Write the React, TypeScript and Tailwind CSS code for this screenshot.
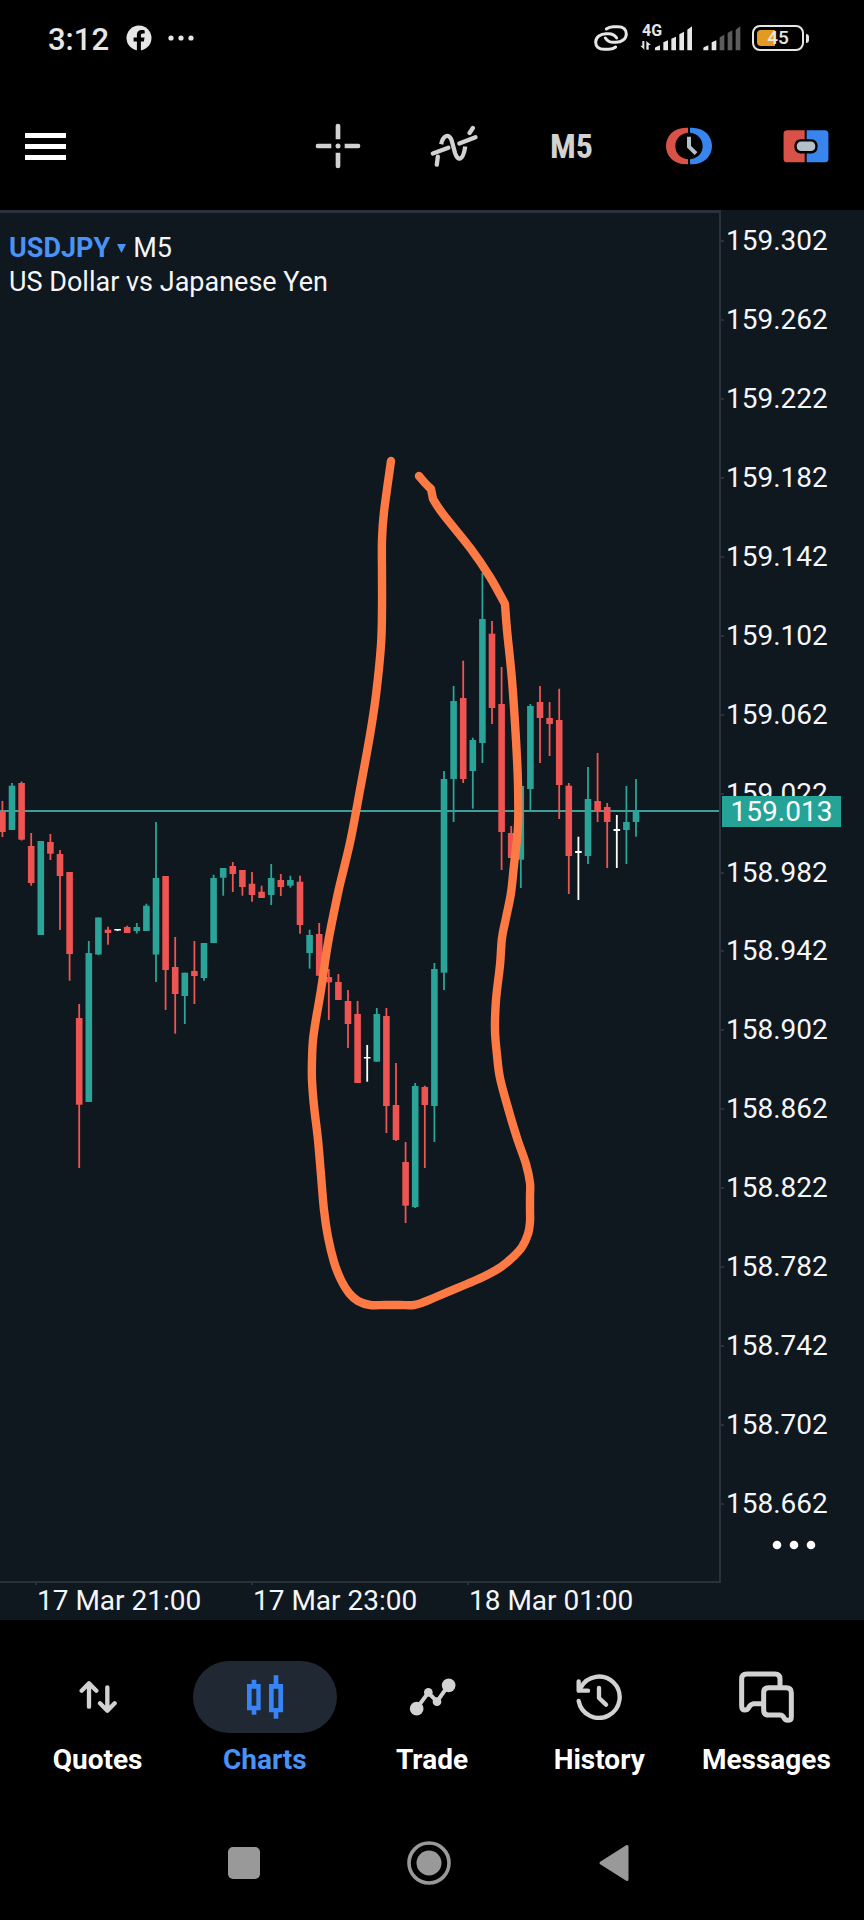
import type { ReactNode } from "react";

type Tone = "up" | "down" | "flat";
/** tone, high, body top, body bottom, low */
type Candle = [Tone, number, number, number, number];

const CANDLES: Candle[] = [
  ["down", 801, 811, 832, 837],
  ["up", 783, 785.7, 830, 830],
  ["down", 781.5, 783, 839.7, 840.5],
  ["down", 833, 846, 883, 885.7],
  ["up", 841, 841, 935, 935],
  ["down", 834, 842, 853.7, 860],
  ["down", 850, 854, 876, 930],
  ["down", 872, 872, 954, 980.7],
  ["down", 1004, 1018, 1104.7, 1168],
  ["up", 941, 953, 1102, 1102],
  ["up", 917.5, 917.5, 954.5, 955],
  ["down", 926.7, 929.7, 933, 944.7],
  ["flat", 929, 929, 930.5, 931],
  ["down", 925.7, 927, 933, 933],
  ["up", 923, 927, 931, 933.5],
  ["up", 903.7, 905.7, 931, 931],
  ["up", 822, 878, 954.5, 982],
  ["down", 876, 876, 970, 1010],
  ["down", 937, 967, 994, 1033.7],
  ["up", 972.7, 972.7, 996, 1024],
  ["down", 941, 971, 976, 1004],
  ["up", 943, 943, 978, 980.7],
  ["up", 874.7, 878, 943, 943],
  ["up", 868, 868, 877.7, 895.7],
  ["down", 862, 866, 874, 892],
  ["down", 870, 870, 887, 895.7],
  ["down", 872, 883.7, 895, 901.7],
  ["down", 885.7, 891.7, 898, 898],
  ["up", 864, 878, 895, 905],
  ["down", 874, 880, 887, 896],
  ["up", 875.7, 880, 885.7, 887.7],
  ["down", 875.7, 881.7, 925, 933.7],
  ["up", 929.7, 935, 953, 968.7],
  ["down", 923, 934, 975.7, 975.7],
  ["down", 969, 977, 982.3, 1020],
  ["down", 974, 982, 1000, 1000],
  ["down", 990, 1001, 1024, 1048],
  ["down", 1001, 1014, 1083, 1083],
  ["flat", 1045, 1057, 1058.5, 1081.7],
  ["up", 1008, 1014, 1061.7, 1061.7],
  ["down", 1008, 1016, 1106, 1133],
  ["down", 1063, 1105, 1140, 1141],
  ["down", 1142, 1162, 1205.7, 1223],
  ["up", 1083, 1086, 1207, 1208],
  ["down", 1085.7, 1087, 1105, 1168],
  ["up", 963, 969, 1106, 1142],
  ["up", 771, 779, 972.7, 990],
  ["up", 686, 701, 779, 822],
  ["down", 660.7, 698, 779, 783],
  ["up", 737.7, 740, 771, 808.7],
  ["up", 573, 619, 743, 763],
  ["down", 621, 633.7, 708, 724],
  ["down", 667, 704, 832, 870],
  ["down", 826, 833, 858, 858],
  ["up", 786, 786, 859.7, 888],
  ["up", 704, 706, 789, 811],
  ["down", 686, 702, 718, 763],
  ["down", 702, 718, 724, 756],
  ["down", 688.7, 720, 785, 819],
  ["down", 783, 785.7, 856, 894],
  ["flat", 836.7, 851, 853, 900],
  ["up", 767, 799, 856, 864],
  ["down", 753, 801, 811, 822],
  ["down", 803, 807, 822, 868],
  ["flat", 815, 829, 831, 868],
  ["up", 786, 822, 830, 864],
  ["up", 779, 811, 822, 836.7],
];

const TONES: Record<Tone, string> = { up: "#2aa398", down: "#ee5451", flat: "#ffffff" };

/** Freehand marker, split where the line turns sharply */
const STROKES: [number, number][][] = [
  [
    [391, 461], [384, 512], [382, 540], [382, 575], [382, 610], [381, 645],
    [376, 695], [370, 735], [360, 790], [351, 838], [344, 868], [338, 893],
    [328, 943], [321, 990], [316, 1019], [313, 1040], [312, 1060], [312, 1080],
    [314, 1106], [318, 1140], [321, 1175], [324, 1210], [328, 1237], [334, 1262],
    [341, 1280], [349, 1293], [358, 1301], [370, 1305], [385, 1305], [400, 1305],
    [414, 1305], [424, 1302], [436, 1297], [467, 1284], [485, 1276], [501, 1267],
    [513, 1257], [522, 1247], [528, 1234], [530, 1222], [530, 1209], [530, 1196],
    [530, 1183], [526, 1164], [517, 1138], [508, 1108], [500, 1078], [497, 1055],
    [495, 1030], [496, 1000], [500, 965], [502, 938], [506, 918], [511, 893],
    [514, 865], [518, 827], [518, 785], [516, 740], [512, 680], [507, 630],
    [505, 604],
  ],
  [[505, 604], [490, 577], [471, 549], [443, 514], [433, 499]],
  [[433, 499], [431, 489]],
  [[431, 489], [425, 483], [419, 476]],
];

function smoothPath(points: [number, number][]) {
  let d = `M${points[0][0]} ${points[0][1]}`;
  for (let i = 0; i < points.length - 1; i++) {
    const a = points[Math.max(i - 1, 0)];
    const b = points[i];
    const c = points[i + 1];
    const e = points[Math.min(i + 2, points.length - 1)];
    d += `C${b[0] + (c[0] - a[0]) / 6} ${b[1] + (c[1] - a[1]) / 6} ${c[0] - (e[0] - b[0]) / 6} ${c[1] - (e[1] - b[1]) / 6} ${c[0]} ${c[1]}`;
  }
  return d;
}

const PRICES = [
  "159.302", "159.262", "159.222", "159.182", "159.142", "159.102",
  "159.062", "159.022", "158.982", "158.942", "158.902", "158.862",
  "158.822", "158.782", "158.742", "158.702", "158.662",
];

const TIMES = ["17 Mar 21:00", "17 Mar 23:00", "18 Mar 01:00"];

function StatusBar() {
  return (
    <div className="flex h-[76px] items-center justify-between pl-12 pr-[55px] text-[#e6e6e6]">
      <div className="flex items-center">
        <span className="w-[78px] pt-1 text-[31px] font-medium leading-8">3:12</span>
        <svg viewBox="0 0 26 26" className="size-[26px]" aria-label="Facebook">
          <circle cx="13" cy="13" r="12.5" fill="#e6e6e6" />
          <path d="M10.9 26V16.6H7.6V12.6H10.9V10.2C10.9 6.6 12.8 5.1 15.9 5.1C17 5.1 18 5.2 18.7 5.4V8.6H16.9C15.4 8.6 14.9 9.4 14.9 10.6V12.6H18.5L17.9 16.6H14.9V26Z" fill="#000" />
        </svg>
        <svg viewBox="0 0 26 6" className="ml-4 h-1.5 w-[26px]" fill="#e6e6e6" aria-label="More notifications">
          <circle cx="3" cy="3" r="2.6" />
          <circle cx="13" cy="3" r="2.6" />
          <circle cx="23" cy="3" r="2.6" />
        </svg>
      </div>
      <div className="flex items-center">
        <svg viewBox="0 0 102 78" className="h-[26px] w-[34px]" fill="none" stroke="#e6e6e6" strokeWidth="9" strokeLinecap="round" aria-label="Linked">
          <path d="M37 12C43 7 50 5 58 5H72C88 5 97 14 97 27C97 42 82 52 66 52H58C47 52 39 47 34 39" />
          <path d="M65 66C59 71 52 73 44 73H30C14 73 5 64 5 51C5 36 20 26 36 26H44C55 26 63 31 68 39" />
        </svg>
        <div className="relative ml-3">
          <svg viewBox="0 0 159 78" className="h-[26px] w-[53px]" fill="#e6e6e6" aria-label="Signal strong">
            <path d="M13 48V74L1 62H7V48ZM19 74V48L33 60H26V74Z" />
            <path d="M45 76V70Q45 67 48 66L60 61V76ZM70 76V52L84 46V76ZM94 76V41L108 35V76ZM118 76V28L132 20V76ZM142 76V14L156 4V76Z" />
          </svg>
          <span className="absolute left-0.5 -top-0.5 text-[16px] font-bold leading-4">4G</span>
        </div>
        <svg viewBox="0 0 117 78" className="ml-[10px] h-[26px] w-[39px]" fill="#e6e6e6" aria-label="Signal weak">
          <path d="M1 76V70Q1 67 4 66L16 61V76ZM26 76V52L40 46V76Z" />
          <path d="M50 76V37L64 29V76ZM74 76V24L88 16V76ZM98 76V14L112 4V76Z" fill="#5c5c5c" />
        </svg>
        <div className="ml-[10px] flex items-center gap-0.5">
          <div className="relative flex h-[26px] w-[52px] items-center justify-center rounded-lg border-2 border-[#e6e6e6]">
            <span className="absolute left-[3px] h-4 w-[18px] rounded-l bg-[#e39a22]" />
            <span className="relative text-[19px] font-medium leading-5">45</span>
          </div>
          <span className="h-[9px] w-[3px] rounded-r bg-[#e6e6e6]" />
        </div>
      </div>
    </div>
  );
}

function ToolButton({ label, children }: { label: string; children: ReactNode }) {
  return (
    <button type="button" aria-label={label} className="flex h-24 w-[117px] items-center justify-center">
      {children}
    </button>
  );
}

function Toolbar() {
  return (
    <header className="flex h-[134px] items-center justify-between pb-1.5 pt-3">
      <button type="button" aria-label="Menu" className="flex h-24 items-center pl-[25px] pr-6">
        <svg viewBox="0 0 41 27" className="h-[27px] w-[41px]" fill="#fff">
          <path d="M0 0H41V5H0ZM0 11H41V16H0ZM0 22H41V27H0Z" />
        </svg>
      </button>
      <div className="flex">
        <ToolButton label="Crosshair">
          <svg viewBox="0 0 138 138" className="size-[46px]" fill="#d2d2d2">
            <path d="M62 49V8Q62 2 69 2T76 8V49ZM62 89V130Q62 136 69 136T76 130V89ZM49 62H8Q2 62 2 69T8 76H49ZM89 62H130Q136 62 136 69T130 76H89Z" />
            <circle cx="69" cy="69" r="7.5" />
          </svg>
        </ToolButton>
        <ToolButton label="Indicators">
          <svg viewBox="30 26 147 130" className="h-[43px] w-[49px]" fill="none" stroke="#d2d2d2" strokeLinecap="round">
            <path d="M38 112L85 95M118 82L167 63" strokeWidth="13" />
            <path d="M63 84C69 59 86 48 95 73L105 110C113 135 129 137 136 91" strokeWidth="13" strokeLinecap="butt" />
            <path d="M53 122L50 146M149 50L159 35" strokeWidth="13" />
          </svg>
        </ToolButton>
        <ToolButton label="Timeframe M5">
          <span className="font-['Roboto_Condensed','Liberation_Sans_Narrow',Roboto,sans-serif] text-[34px] font-bold leading-10 text-[#d2d2d2]">M5</span>
        </ToolButton>
        <ToolButton label="Pending order">
          <svg viewBox="0 0 138 114" className="h-[38px] w-[46px]">
            <path d="M66 2H60C22 2 0 28 0 57S22 112 60 112H66V97C42 94 28 78 28 57S42 20 66 17Z" fill="#d95248" />
            <path d="M72 2H78C116 2 138 28 138 57S116 112 78 112H72V97C96 94 110 78 110 57S96 20 72 17Z" fill="#3785ed" />
            <path d="M69 29V59L90 80" fill="none" stroke="#b3c0c7" strokeWidth="12" />
          </svg>
        </ToolButton>
        <ToolButton label="One-click trading">
          <svg viewBox="0 0 138 100" className="h-[33px] w-[46px]">
            <path d="M65 1H12Q1 1 1 12V87Q1 98 12 98H65Z" fill="#d95248" />
            <path d="M71 1H126Q137 1 137 12V87Q137 98 126 98H71Z" fill="#3785ed" />
            <rect x="34" y="28" width="70" height="43" rx="18" fill="#000" />
            <rect x="41" y="35" width="56" height="29" rx="13" fill="#b3c0c7" />
          </svg>
        </ToolButton>
      </div>
    </header>
  );
}

function CandleChart() {
  return (
    <svg viewBox="0 213 719 1368" preserveAspectRatio="none" className="absolute inset-0 size-full" aria-label="USDJPY candlestick chart">
      <path d="M0 811H719" stroke="#3f9f98" strokeWidth="2" />
      {CANDLES.map(([tone, high, top, bottom, low], i) => {
        const x = 2.4 + i * 9.6;
        return (
          <g key={i} fill={TONES[tone]}>
            <rect x={x - 0.9} y={high} width="1.8" height={low - high} />
            <rect x={x - 3.3} y={top} width="6.6" height={bottom - top} />
          </g>
        );
      })}
      <path d={STROKES.map(smoothPath).join("")} fill="none" stroke="#fe7a45" strokeWidth="8.4" strokeLinecap="round" strokeLinejoin="round" />
    </svg>
  );
}

function Chart() {
  return (
    <main className="flex flex-1 flex-col bg-[#0f171f] text-[28px] text-[#f4f6f8]">
      <div className="flex flex-1">
        <div className="relative flex-1 border-b-2 border-r-2 border-t-[3px] border-[#2a313c]">
          <CandleChart />
          <div className="relative pl-[9px] pt-[18px] text-[27px] leading-[34px]">
            <button type="button" className="flex items-center">
              <span className="font-bold text-[#4a92f5]">USDJPY</span>
              <svg viewBox="0 0 9 9" className="mx-[7px] size-[9px]" fill="#4a92f5">
                <path d="M0 0H9L4.5 9Z" />
              </svg>
              <span>M5</span>
            </button>
            <p>US Dollar vs Japanese Yen</p>
          </div>
        </div>
        <aside className="relative flex w-[143px] flex-col pt-[15px]">
          <ul className="flex flex-1 flex-col justify-between">
            {PRICES.map((price) => (
              <li key={price} className="flex items-center gap-0.5 leading-8">
                <span className="h-0.5 w-[3px] bg-[#2a313c]" />
                <span>{price}</span>
              </li>
            ))}
          </ul>
          <output className="absolute left-px top-[586px] flex h-[31px] w-[119px] items-center justify-center bg-[#26a397] leading-8 text-white">
            159.013
          </output>
          <button type="button" aria-label="More" className="flex h-[63px] justify-center pl-0.5 pt-5">
            <svg viewBox="0 0 44 10" className="h-[10px] w-11" fill="#fff">
              <circle cx="5" cy="5" r="4.3" />
              <circle cx="22" cy="5" r="4.3" />
              <circle cx="39" cy="5" r="4.3" />
            </svg>
          </button>
        </aside>
      </div>
      <div className="flex h-[37px] pl-[35px]">
        {TIMES.map((time) => (
          <div key={time} className="flex w-[216px] items-start">
            <span className="h-0.5 w-0.5 bg-[#2a313c]" />
            <span className="leading-9">{time}</span>
          </div>
        ))}
      </div>
    </main>
  );
}

function NavItem({ label, active, children }: { label: string; active?: boolean; children: ReactNode }) {
  return (
    <a
      href={`#${label.toLowerCase()}`}
      aria-current={active ? "page" : undefined}
      className={`flex flex-1 flex-col items-center gap-[10px] text-[28px] font-bold leading-[34px] ${active ? "text-[#4a92f5]" : "text-white"}`}
    >
      <span className={`flex h-[72px] w-36 items-center justify-center rounded-full ${active ? "bg-[#202833]" : ""}`}>{children}</span>
      {label}
    </a>
  );
}

function BottomNav() {
  return (
    <nav className="flex h-[184px] px-[14px] pt-[41px]">
      <NavItem label="Quotes">
        <svg viewBox="0 0 114 102" className="h-[34px] w-[38px]" fill="none" stroke="#d2d2d2" strokeWidth="13" strokeLinecap="round" strokeLinejoin="round">
          <path d="M30 80V12M8 32L30 10L52 32" />
          <path d="M85 22V90M63 70L85 92L107 70" />
        </svg>
      </NavItem>
      <NavItem label="Charts" active>
        <svg viewBox="0 0 108 132" className="h-11 w-9">
          <path d="M14 14H28V27H41V106H28V119H14V106H0V27H14ZM14 41V92H28V41Z" fill="#3785f5" fillRule="evenodd" />
          <path d="M80 1H94V27H108V112H94V131H80V112H66V27H80ZM80 41V99H94V41Z" fill="#3785f5" fillRule="evenodd" />
        </svg>
      </NavItem>
      <NavItem label="Trade">
        <svg viewBox="25 53 141 114" className="h-[38px] w-[47px]" fill="#d2d2d2">
          <path d="M48 144L83 97L109 124L143 75" fill="none" stroke="#d2d2d2" strokeWidth="12" />
          <circle cx="48" cy="145" r="20.5" />
          <circle cx="83" cy="96" r="13" />
          <circle cx="109" cy="124" r="13" />
          <circle cx="144" cy="75" r="20.5" />
        </svg>
      </NavItem>
      <NavItem label="History">
        <svg viewBox="0 0 138 138" className="size-[46px]" fill="none" stroke="#d2d2d2" strokeWidth="13" strokeLinecap="round" strokeLinejoin="round">
          <path d="M8 81A62 62 0 1 0 14 41" />
          <path d="M8 22V50H36" />
          <path d="M69 42V72L90 92" />
        </svg>
      </NavItem>
      <NavItem label="Messages">
        <svg viewBox="0 0 165 156" className="h-[52px] w-[55px]" fill="none" stroke="#d2d2d2" strokeWidth="15" strokeLinejoin="round" strokeLinecap="round">
          <path d="M123 48V24Q123 9 108 9H23Q8 9 8 24V104Q8 117 18 117Q25 117 29 110Q34 100 44 98H72" />
          <path d="M89 50H142Q157 50 157 65V139Q157 148 146 148Q139 148 135 141Q132 132 122 132H89Q74 132 74 117V65Q74 50 89 50Z" />
        </svg>
      </NavItem>
    </nav>
  );
}

function SystemNav() {
  const button = "flex h-16 w-[185px] items-center justify-center";
  return (
    <div className="flex h-[116px] items-center justify-center pr-1.5 pt-0.5">
      <button type="button" aria-label="Recent apps" className={button}>
        <span className="size-8 rounded-[5px] bg-[#999]" />
      </button>
      <button type="button" aria-label="Home" className={button}>
        <svg viewBox="0 0 44 44" className="size-11">
          <circle cx="22" cy="22" r="20" fill="none" stroke="#999" strokeWidth="3.6" />
          <circle cx="22" cy="22" r="12.5" fill="#999" />
        </svg>
      </button>
      <button type="button" aria-label="Back" className={button}>
        <svg viewBox="0 0 30 38" className="h-[38px] w-[30px]">
          <path d="M28 2.5V35.5L2 19Z" fill="#999" stroke="#999" strokeWidth="3" strokeLinejoin="round" />
        </svg>
      </button>
    </div>
  );
}

export default function App() {
  return (
    <div className="flex min-h-screen flex-col bg-black font-[Roboto,sans-serif]">
      <StatusBar />
      <Toolbar />
      <Chart />
      <BottomNav />
      <SystemNav />
    </div>
  );
}
